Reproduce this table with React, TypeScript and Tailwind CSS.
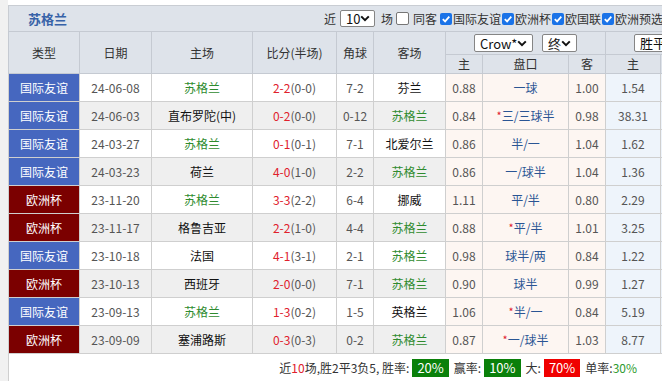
import React from 'react'

type Match = {
  type: 'friendly' | 'euro'
  date: string
  home: string
  score: string
  half: string
  corner: string
  away: string
  h: string
  line: string
  star?: boolean
  a: string
  w: string
}

const matches: Match[] = [
  { type: 'friendly', date: '24-06-08', home: '苏格兰', score: '2-2', half: '(0-0)', corner: '7-2', away: '芬兰', h: '0.88', line: '一球', a: '1.00', w: '1.54' },
  { type: 'friendly', date: '24-06-03', home: '直布罗陀(中)', score: '0-2', half: '(0-0)', corner: '0-12', away: '苏格兰', h: '0.84', line: '三/三球半', star: true, a: '0.98', w: '38.31' },
  { type: 'friendly', date: '24-03-27', home: '苏格兰', score: '0-1', half: '(0-1)', corner: '7-1', away: '北爱尔兰', h: '0.86', line: '半/一', a: '1.04', w: '1.62' },
  { type: 'friendly', date: '24-03-23', home: '荷兰', score: '4-0', half: '(1-0)', corner: '2-2', away: '苏格兰', h: '0.86', line: '一/球半', a: '1.04', w: '1.36' },
  { type: 'euro', date: '23-11-20', home: '苏格兰', score: '3-3', half: '(2-2)', corner: '6-4', away: '挪威', h: '1.11', line: '平/半', a: '0.80', w: '2.29' },
  { type: 'euro', date: '23-11-17', home: '格鲁吉亚', score: '2-2', half: '(1-0)', corner: '4-4', away: '苏格兰', h: '0.88', line: '平/半', star: true, a: '1.01', w: '3.25' },
  { type: 'friendly', date: '23-10-18', home: '法国', score: '4-1', half: '(3-1)', corner: '2-1', away: '苏格兰', h: '0.98', line: '球半/两', a: '0.84', w: '1.22' },
  { type: 'euro', date: '23-10-13', home: '西班牙', score: '2-0', half: '(0-0)', corner: '7-1', away: '苏格兰', h: '0.90', line: '球半', a: '0.99', w: '1.27' },
  { type: 'friendly', date: '23-09-13', home: '苏格兰', score: '1-3', half: '(0-2)', corner: '1-5', away: '英格兰', h: '1.06', line: '半/一', star: true, a: '0.84', w: '5.19' },
  { type: 'euro', date: '23-09-09', home: '塞浦路斯', score: '0-3', half: '(0-3)', corner: '0-2', away: '苏格兰', h: '0.87', line: '一/球半', star: true, a: '1.03', w: '8.77' },
]

const Chevron = () => (
  <svg width="10" height="7" viewBox="0 0 10 7" className="shrink-0">
    <path d="M1.2 1.4 L5 5.2 L8.8 1.4" fill="none" stroke="#111" strokeWidth="2" />
  </svg>
)

function Select({ label, className }: { label: string; className: string }) {
  return (
    <div className={'inline-flex items-center justify-between bg-white border border-[#858585] rounded-[2px] px-[5px] text-[13px] text-[#111] leading-none ' + className}>
      <span>{label}</span>
      <Chevron />
    </div>
  )
}

function Check({ on, className = '' }: { on?: boolean; className?: string }) {
  if (!on) {
    return <span className={'inline-block w-[13px] h-[13px] rounded-[2px] border border-[#767676] bg-white ' + className} />
  }
  return (
    <span className={'inline-flex items-center justify-center w-[12px] h-[12px] rounded-[2px] bg-[#1a73e8] ' + className}>
      <svg width="10" height="10" viewBox="0 0 10 10">
        <path d="M1.8 5.2 L4.1 7.4 L8.3 2.6" fill="none" stroke="#fff" strokeWidth="1.8" />
      </svg>
    </span>
  )
}

const teamColor = (t: string) => (t === '苏格兰' ? 'text-[#2e8b2e]' : 'text-[#111]')

export default function App() {
  return (
    <div className="w-[662px] h-[381px] overflow-hidden bg-[#f1f1f1] font-['Noto_Sans_CJK_SC',sans-serif] text-[12px] text-[#333]">
      <div className="ml-[8px] w-[764px]">
        <div className="h-[6px] bg-white border-b border-[#c9cdd3]" />
        <div className="h-[25px] bg-[#dee3ea] flex items-center whitespace-nowrap border-l border-[#c9cdd3]">
          <div className="w-[315px] pl-[19px] text-[13px] font-bold text-[#3762a8]">苏格兰</div>
          <span>近</span>
          <Select label="10" className="w-[35px] h-[17px] ml-[4px]" />
          <span className="ml-[6px]">场</span>
          <Check className="ml-[3px] mr-[4px]" />
          <span>同客</span>
          <Check on className="ml-[3px] mr-[1px]" />
          <span>国际友谊</span>
          <Check on className="ml-[1px] mr-[1px]" />
          <span>欧洲杯</span>
          <Check on className="ml-[1px] mr-[1px]" />
          <span>欧国联</span>
          <Check on className="ml-[1px] mr-[1px]" />
          <span>欧洲预选</span>
        </div>
        <table className="table-fixed border-collapse w-[764px] text-center">
          <colgroup>
            <col className="w-[71px]" />
            <col className="w-[72px]" />
            <col className="w-[101px]" />
            <col className="w-[84px]" />
            <col className="w-[37px]" />
            <col className="w-[72px]" />
            <col className="w-[37px]" />
            <col className="w-[86px]" />
            <col className="w-[37px]" />
            <col className="w-[55px]" />
            <col className="w-[56px]" />
            <col className="w-[56px]" />
          </colgroup>
          <thead className="bg-[#dee3ea] text-[#333]">
            <tr className="h-[23px]">
              <th rowSpan={2} className="font-normal border border-[#c5cad2]">类型</th>
              <th rowSpan={2} className="font-normal border border-[#c5cad2]">日期</th>
              <th rowSpan={2} className="font-normal border border-[#c5cad2]">主场</th>
              <th rowSpan={2} className="font-normal border border-[#c5cad2]">比分(半场)</th>
              <th rowSpan={2} className="font-normal border border-[#c5cad2]">角球</th>
              <th rowSpan={2} className="font-normal border border-[#c5cad2]">客场</th>
              <th colSpan={3} className="font-normal border border-[#c5cad2]">
                <div className="flex items-center justify-center gap-[9px]">
                  <Select label="Crow*" className="w-[59px] h-[18px]" />
                  <Select label="终" className="w-[35px] h-[18px]" />
                </div>
              </th>
              <th colSpan={3} className="font-normal border border-[#c5cad2] text-left pl-[28px]">
                <Select label="胜平负" className="w-[108px] h-[18px]" />
              </th>
            </tr>
            <tr className="h-[18px]">
              <th className="font-normal border border-[#c5cad2]">主</th>
              <th className="font-normal border border-[#c5cad2]">盘口</th>
              <th className="font-normal border border-[#c5cad2]">客</th>
              <th className="font-normal border border-[#c5cad2]">主</th>
              <th className="font-normal border border-[#c5cad2]">和</th>
              <th className="font-normal border border-[#c5cad2]">客</th>
            </tr>
          </thead>
          <tbody>
            {matches.map((m, i) => {
              const rowBg = i % 2 === 0 ? 'bg-white' : 'bg-[#efefef]'
              return (
                <tr key={m.date} className="h-[28px]">
                  <td className={'border border-[#cfcfcf] text-white ' + (m.type === 'euro' ? 'bg-[#7b0000]' : 'bg-[#4667bf]')}>
                    {m.type === 'euro' ? '欧洲杯' : '国际友谊'}
                  </td>
                  <td className={'border border-[#cfcfcf] text-[#555] ' + rowBg}>{m.date}</td>
                  <td className={'border border-[#cfcfcf] ' + rowBg + ' ' + teamColor(m.home)}>{m.home}</td>
                  <td className={'border border-[#cfcfcf] text-[#555] ' + rowBg}>
                    <span className="text-[#e0202c]">{m.score}</span>
                    {m.half}
                  </td>
                  <td className={'border border-[#cfcfcf] text-[#555] ' + rowBg}>{m.corner}</td>
                  <td className={'border border-[#cfcfcf] ' + rowBg + ' ' + teamColor(m.away)}>{m.away}</td>
                  <td className="border border-[#cfcfcf] bg-[#fdf6f2] text-[#555]">{m.h}</td>
                  <td className="border border-[#cfcfcf] bg-[#fdf6f2] text-[#2a5594]">
                    {m.star && <span className="text-[#e0202c] align-top text-[11px]">*</span>}
                    {m.line}
                  </td>
                  <td className="border border-[#cfcfcf] bg-[#fdf6f2] text-[#555]">{m.a}</td>
                  <td className="border border-[#cfcfcf] bg-[#eef4fb] text-[#555]">{m.w}</td>
                  <td className="border border-[#cfcfcf] bg-[#eef4fb]" />
                  <td className="border border-[#cfcfcf] bg-[#eef4fb]" />
                </tr>
              )
            })}
            <tr className="h-[28px]">
              <td colSpan={12} className="border border-[#cfcfcf] bg-white">
                <div className="w-[628px] flex items-center justify-end whitespace-nowrap text-[#333]">
                  <span>
                    近<span className="text-[#e0202c]">10</span>场,胜2平3负5, 胜率:
                  </span>
                  <span className="ml-[3px] mr-[5px] px-[5px] h-[18px] leading-[18px] text-[13px] bg-[#0a800a] text-white">20%</span>
                  <span>赢率:</span>
                  <span className="ml-[3px] mr-[5px] px-[5px] h-[18px] leading-[18px] text-[13px] bg-[#0a800a] text-white">10%</span>
                  <span>大:</span>
                  <span className="ml-[3px] mr-[5px] px-[5px] h-[18px] leading-[18px] text-[13px] bg-[#f00000] text-white">70%</span>
                  <span>
                    单率:<span className="text-[#2e9a2e]">30%</span>
                  </span>
                </div>
              </td>
            </tr>
          </tbody>
        </table>
      </div>
    </div>
  )
}
